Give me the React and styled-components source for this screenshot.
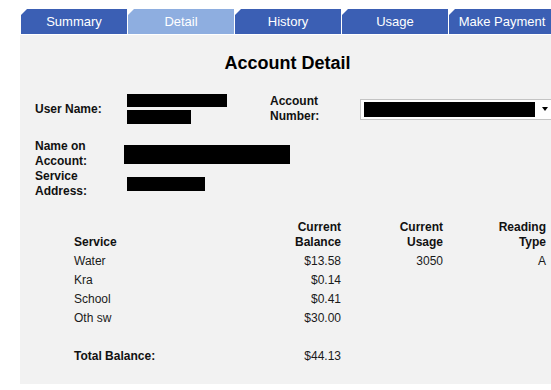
import React from "react";
import styled, { createGlobalStyle } from "styled-components";

const GlobalStyle = createGlobalStyle`
    html, body {
        margin: 0;
        padding: 0;
        background: #ffffff;
        overflow: hidden;
        font-family: "Liberation Sans", Arial, sans-serif;
    }
`;

const Page = styled.div`
    width: 551px;
    height: 390px;
    padding-top: 9px;
    box-sizing: border-box;
    overflow: hidden;
`;

const TabBar = styled.div`
    display: flex;
    gap: 1px;
    padding-left: 21px;
    width: 600px;
`;

const Tab = styled.div`
    flex: 0 0 106px;
    height: 25px;
    display: flex;
    align-items: center;
    justify-content: center;
    font-size: 13px;
    color: #ffffff;
    background: ${(p) => (p.$active ? "#8eaee0" : "#3b5fb4")};
    clip-path: polygon(6px 0, 100% 0, 100% 100%, 0 100%, 0 6px);
    white-space: nowrap;
`;

const Panel = styled.div`
    margin-top: 1px;
    margin-left: 20px;
    width: 535px;
    background: #f2f2f2;
    padding: 17px 0 18px 0;
    box-sizing: border-box;
`;

const Title = styled.h1`
    margin: 0;
    font-size: 18px;
    line-height: 22px;
    font-weight: bold;
    text-align: center;
    color: #000;
`;

const Info = styled.div`
    margin-top: 20px;
    padding-left: 15px;
`;

const InfoRow = styled.div`
    display: grid;
    grid-template-columns: 89px 146px 90px 1fr;
    align-items: center;
    margin-top: ${(p) => p.$gap || 0}px;
`;

const Label = styled.div`
    font-size: 12px;
    line-height: 15px;
    font-weight: bold;
    color: #111;
`;

const Values = styled.div`
    display: flex;
    flex-direction: column;
    gap: 3px;
`;

const Redacted = styled.div`
    background: #000;
    height: ${(p) => p.$h}px;
    width: ${(p) => p.$w}px;
    margin-left: ${(p) => p.$offset || 0}px;
`;

const SelectBox = styled.div`
    display: flex;
    align-items: center;
    width: 200px;
    height: 21px;
    box-sizing: border-box;
    background: #fff;
    border: 1px solid #c4c4c4;
    padding: 0 0 0 3px;
    gap: 7px;
`;

const Caret = styled.span`
    width: 0;
    height: 0;
    border-left: 3px solid transparent;
    border-right: 3px solid transparent;
    border-top: 4px solid #000;
`;

const Table = styled.table`
    margin-top: 21px;
    margin-left: 54px;
    border-collapse: collapse;
    font-size: 12px;
    color: #1a1a1a;
`;

const HeadCell = styled.th`
    padding: 0 0 2px 0;
    line-height: 15px;
    font-weight: bold;
    color: #111;
    vertical-align: bottom;
    text-align: ${(p) => (p.$right ? "right" : "left")};
    width: ${(p) => p.$w}px;
`;

const Cell = styled.td`
    padding: 0;
    height: 19px;
    line-height: 19px;
    text-align: ${(p) => (p.$right ? "right" : "left")};
    font-weight: ${(p) => (p.$bold ? "bold" : "normal")};
    color: ${(p) => (p.$bold ? "#111" : "#1a1a1a")};
`;

const tabs = ["Summary", "Detail", "History", "Usage", "Make Payment"];

const rows = [
    { service: "Water", balance: "$13.58", usage: "3050", type: "A" },
    { service: "Kra", balance: "$0.14", usage: "", type: "" },
    { service: "School", balance: "$0.41", usage: "", type: "" },
    { service: "Oth sw", balance: "$30.00", usage: "", type: "" },
];

export default function App() {
    return (
        <>
            <GlobalStyle />
            <Page>
                <TabBar>
                    {tabs.map((t) => (
                        <Tab key={t} $active={t === "Detail"}>
                            {t}
                        </Tab>
                    ))}
                </TabBar>
                <Panel>
                    <Title>Account Detail</Title>
                    <Info>
                        <InfoRow>
                            <Label>User Name:</Label>
                            <Values>
                                <Redacted $w={100} $h={13} $offset={3} />
                                <Redacted $w={64} $h={14} $offset={3} />
                            </Values>
                            <Label>
                                Account
                                <br />
                                Number:
                            </Label>
                            <SelectBox>
                                <Redacted $w={171} $h={15} />
                                <Caret />
                            </SelectBox>
                        </InfoRow>
                        <InfoRow $gap={15}>
                            <Label>
                                Name on
                                <br />
                                Account:
                            </Label>
                            <Values>
                                <Redacted $w={166} $h={19} />
                            </Values>
                        </InfoRow>
                        <InfoRow>
                            <Label>
                                Service
                                <br />
                                Address:
                            </Label>
                            <Values>
                                <Redacted $w={78} $h={14} $offset={3} />
                            </Values>
                        </InfoRow>
                    </Info>
                    <Table>
                        <thead>
                            <tr>
                                <HeadCell $w={180}>Service</HeadCell>
                                <HeadCell $w={87} $right>
                                    Current
                                    <br />
                                    Balance
                                </HeadCell>
                                <HeadCell $w={102} $right>
                                    Current
                                    <br />
                                    Usage
                                </HeadCell>
                                <HeadCell $w={103} $right>
                                    Reading
                                    <br />
                                    Type
                                </HeadCell>
                            </tr>
                        </thead>
                        <tbody>
                            {rows.map((r) => (
                                <tr key={r.service}>
                                    <Cell>{r.service}</Cell>
                                    <Cell $right>{r.balance}</Cell>
                                    <Cell $right>{r.usage}</Cell>
                                    <Cell $right>{r.type}</Cell>
                                </tr>
                            ))}
                            <tr>
                                <Cell colSpan={4} />
                            </tr>
                            <tr>
                                <Cell $bold>Total Balance:</Cell>
                                <Cell $right>$44.13</Cell>
                                <Cell />
                                <Cell />
                            </tr>
                        </tbody>
                    </Table>
                </Panel>
            </Page>
        </>
    );
}
